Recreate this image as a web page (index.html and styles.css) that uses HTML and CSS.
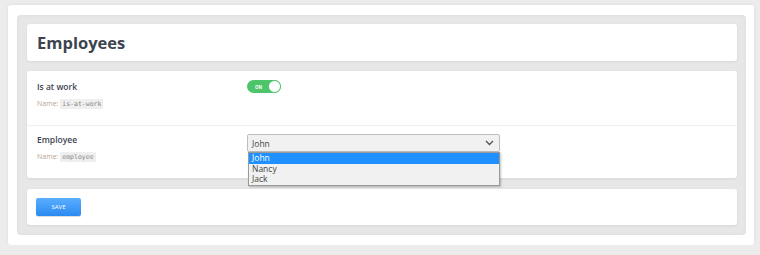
FILE: index.html
```html
<!DOCTYPE html>
<html lang="en">
<head>
    <meta charset="UTF-8">
    <meta name="viewport" content="width=device-width, initial-scale=1.0">
    <title>Employees</title>
    <link rel="stylesheet" href="styles.css">
</head>
<body>
    <div class="frame">
        <div class="panel">
            <div class="card header">
                <h1>Employees</h1>
            </div>

            <div class="card fields">
                <div class="field">
                    <div class="field-info">
                        <div class="field-label">Is at work</div>
                        <div class="field-name">Name: <code>is-at-work</code></div>
                    </div>
                    <div class="field-input">
                        <div class="toggle">
                            <span class="toggle-text">ON</span>
                            <span class="toggle-knob"></span>
                        </div>
                    </div>
                </div>

                <div class="field">
                    <div class="field-info">
                        <div class="field-label">Employee</div>
                        <div class="field-name">Name: <code>employee</code></div>
                    </div>
                    <div class="field-input">
                        <div class="select-wrap">
                            <div class="select">
                                <span>John</span>
                                <svg class="chevron" width="9" height="6" viewBox="0 0 9 6">
                                    <path d="M1 1 L4.5 4.5 L8 1" fill="none" stroke="#555" stroke-width="1.4"/>
                                </svg>
                            </div>
                            <ul class="options">
                                <li class="selected">John</li>
                                <li>Nancy</li>
                                <li>Jack</li>
                            </ul>
                        </div>
                    </div>
                </div>
            </div>

            <div class="card actions">
                <button class="save-btn">SAVE</button>
            </div>
        </div>
    </div>
</body>
</html>
```

FILE: styles.css
```css
body {
    margin: 0;
    background-color: #ececec;
    font-family: 'Open Sans', 'Noto Sans', Arial, sans-serif;
    color: #3d4450;
}
.frame {
    margin: 5px 6px 0 8px;
    height: 240px;
    box-sizing: border-box;
    background-color: #fff;
    padding: 10px 8px 9px 9px;
    border-radius: 3px;
    box-shadow: 0 0 4px rgba(0,0,0,0.06);
}
.panel {
    background-color: #e7e7e7;
    padding: 9px 9px 10px 10px;
    border-radius: 4px;
    box-shadow: inset 0 0 4px rgba(0,0,0,0.05);
    display: flex;
    flex-direction: column;
    gap: 10px;
}
.card {
    background-color: #fff;
    border-radius: 3px;
    box-shadow: 0 1px 3px rgba(0,0,0,0.07);
}
.header {
    height: 37px;
    display: flex;
    align-items: center;
    padding-left: 10px;
}
h1 {
    margin: 0;
    font-size: 16.5px;
    font-weight: bold;
    color: #3d4450;
}
.fields {
    margin-bottom: 1px;
}
.field {
    display: flex;
    padding: 10px 10px 0 10px;
    height: 54px;
    box-sizing: border-box;
}
.field + .field {
    border-top: 1px solid #f0f0f0;
    padding-top: 8px;
    height: 53px;
}
.field-info {
    width: 210px;
}
.field-label {
    font-size: 8.5px;
    font-weight: 600;
    line-height: 12px;
}
.field-name {
    margin-top: 6px;
    font-size: 7px;
    color: #b8a290;
}
code {
    font-family: 'DejaVu Sans Mono', 'Liberation Mono', monospace;
    font-size: 6.5px;
    color: #888;
    background-color: #efefef;
    padding: 1px 2px;
}
.field-input {
    flex: 1;
}
.toggle {
    width: 34px;
    height: 13px;
    box-sizing: border-box;
    background-color: #4ec46b;
    border-radius: 7px;
    display: flex;
    align-items: center;
    justify-content: space-between;
    padding-left: 8px;
    margin-top: -1px;
}
.toggle-text {
    font-size: 4.5px;
    color: #fff;
    font-weight: bold;
}
.toggle-knob {
    width: 13px;
    height: 13px;
    box-sizing: border-box;
    border-radius: 50%;
    background-color: #fff;
    border: 1px solid #4ec46b;
}
.select-wrap {
    position: relative;
    width: 253px;
}
.select {
    height: 18px;
    box-sizing: border-box;
    background-color: #f1f1f1;
    border: 1px solid #bdbdbd;
    border-radius: 2px;
    display: flex;
    align-items: center;
    justify-content: space-between;
    padding: 0 5px 0 4px;
    font-size: 8.5px;
    color: #444;
}
.options {
    position: absolute;
    top: 18px;
    left: 1px;
    right: 0;
    margin: 0;
    padding: 0;
    list-style: none;
    background-color: #f1f1f1;
    border: 1px solid #9a9a9a;
    box-shadow: 1px 1px 2px rgba(0,0,0,0.25);
    font-size: 8.5px;
    color: #444;
}
.options li {
    height: 10.5px;
    line-height: 10.5px;
    padding-left: 3px;
}
.options li.selected {
    background-color: #1e90ff;
    color: #fff;
}
.actions {
    height: 36px;
    display: flex;
    align-items: center;
    padding-left: 9px;
}
.save-btn {
    width: 45px;
    height: 18px;
    border: none;
    border-radius: 2px;
    background: linear-gradient(#5aaeff, #2b8af0);
    color: #fff;
    font-family: 'Open Sans', Arial, sans-serif;
    font-size: 6px;
    padding: 0;
    box-shadow: 0 1px 1px rgba(0,0,0,0.15);
}
```
